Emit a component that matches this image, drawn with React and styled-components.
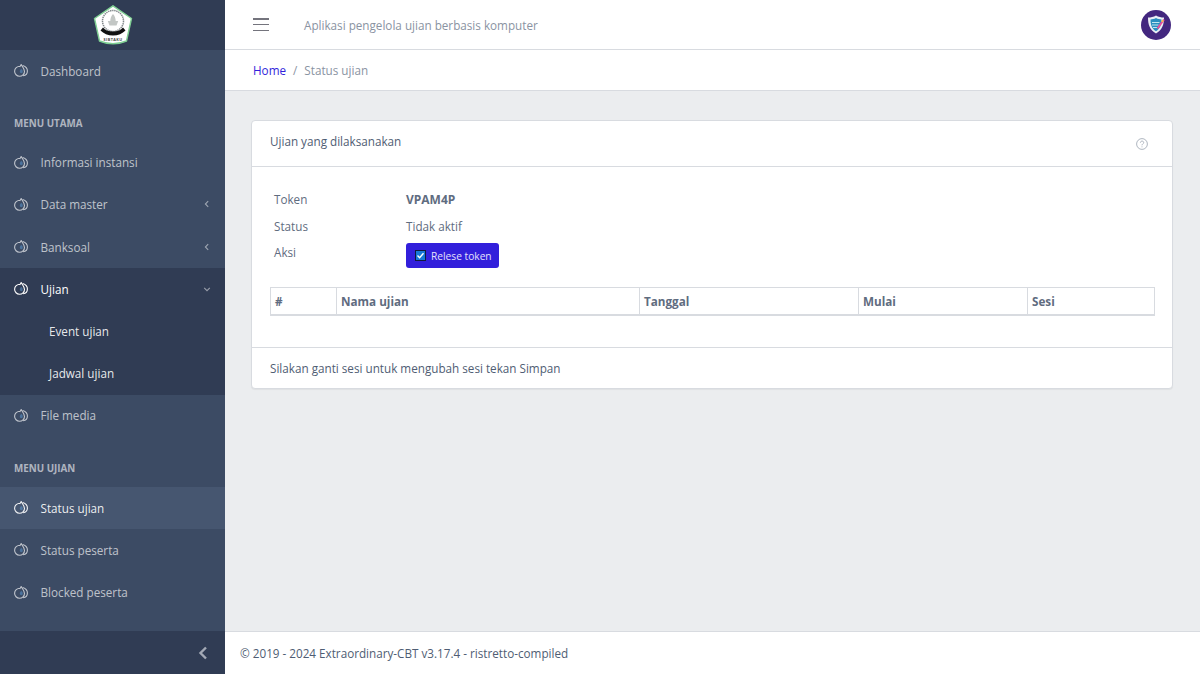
import React from 'react'
import styled, { createGlobalStyle } from 'styled-components'

const GlobalStyle = createGlobalStyle`
  html, body { margin: 0; padding: 0; height: 100%; }
  body {
    font-family: "Open Sans", "Noto Sans", sans-serif;
    font-size: 11.7px;
    color: #4f5d73;
    background: #ebedef;
  }
  * { box-sizing: border-box; }
`

const Layout = styled.div`
  display: flex;
  width: 1200px;
  height: 674px;
  overflow: hidden;
`

const Sidebar = styled.aside`
  width: 225px;
  flex-shrink: 0;
  display: flex;
  flex-direction: column;
  background: #3c4b64;
  color: rgba(255, 255, 255, 0.8);
`

const Brand = styled.div`
  height: 50px;
  background: #303c54;
  display: flex;
  align-items: center;
  justify-content: center;
`

const Nav = styled.nav`
  flex: 1;
`

const NavTitle = styled.div`
  height: ${p => p.$h}px;
  padding: 25px 14px 0;
  font-size: 9.8px;
  line-height: 14px;
  font-weight: 700;
  text-transform: uppercase;
  color: rgba(255, 255, 255, 0.6);
`

const NavItem = styled.div`
  height: 42.2px;
  display: flex;
  align-items: center;
  padding: 0 14px 0.5px;
  color: ${p => (p.$open ? '#fff' : 'rgba(255, 255, 255, 0.68)')};
  background: ${p => (p.$active ? '#465670' : p.$open ? '#303c54' : 'transparent')};
  ${p => p.$active && 'color: rgba(255, 255, 255, 0.92);'}

  svg.drop {
    width: 14px;
    height: 13px;
    margin-right: 12.5px;
    flex-shrink: 0;
  }
`

const ItemLabel = styled.span`
  flex: 1;
`

const SubItem = styled.div`
  height: 42.2px;
  display: flex;
  align-items: center;
  padding: 0 0 0.5px 49px;
  background: #303c54;
  color: rgba(255, 255, 255, 0.9);
`

const Minimizer = styled.div`
  height: 43px;
  background: #303c54;
  display: flex;
  align-items: center;
  justify-content: flex-end;
  padding-right: 16px;
  color: #a3a9b5;
`

const Main = styled.div`
  flex: 1;
  display: flex;
  flex-direction: column;
  min-width: 0;
`

const Header = styled.header`
  height: 50px;
  background: #fff;
  border-bottom: 1px solid #d8dbe0;
  display: flex;
  align-items: center;
  padding: 0 29px 0 28px;
`

const Burger = styled.div`
  width: 16px;
  height: 13px;
  margin-right: 35px;
  display: flex;
  flex-direction: column;
  justify-content: space-between;

  span {
    display: block;
    height: 1.5px;
    background: #74747d;
  }
`

const Tagline = styled.div`
  flex: 1;
  color: #8a93a2;
`

const Crumbs = styled.div`
  height: 41px;
  background: #fff;
  border-bottom: 1px solid #d8dbe0;
  display: flex;
  align-items: center;
  padding: 0 28px;
  color: #8a93a2;
`

const HomeLink = styled.a`
  color: #321fdb;
`

const Sep = styled.span`
  margin: 0 7px;
`

const Body = styled.main`
  flex: 1;
  padding: 29px 27px 0 26px;
`

const Card = styled.section`
  background: #fff;
  border: 1px solid #d8dbe0;
  border-radius: 4px;
  box-shadow: 0 1px 1px rgba(0, 0, 21, 0.05);
`

const CardHeader = styled.div`
  height: 46px;
  padding: 0 24px 5px 18px;
  border-bottom: 1px solid #d8dbe0;
  display: flex;
  align-items: center;
  justify-content: space-between;
`

const CardTitle = styled.div`
  color: #4f5d73;
  margin-top: -1px;
`

const CardHelp = styled.div`
  display: flex;
  margin-top: 5px;
`

const CardBody = styled.div`
  padding: 20px 18px 31px;
`

const InfoGrid = styled.div`
  display: grid;
  grid-template-columns: 132px 1fr;
  padding-left: 4px;
  grid-auto-rows: min-content;
`

const InfoLabel = styled.div`
  height: ${p => p.$h}px;
  padding-top: 4px;
  line-height: 17px;
  color: #5f6c80;
`

const InfoValue = styled.div`
  height: ${p => p.$h}px;
  padding-top: 4px;
  line-height: 17px;
  color: #5f6c80;
  font-weight: ${p => (p.$bold ? 700 : 400)};
  font-size: ${p => (p.$bold ? '12px' : 'inherit')};
`

const ReleaseButton = styled.button`
  display: inline-flex;
  align-items: center;
  height: 25px;
  width: 93px;
  margin-top: -1px;
  padding: 0 0 0 9px;
  border: 0;
  border-radius: 3px;
  background: #321fdb;
  color: #e4e1fb;
  font-family: inherit;
  font-size: 10.2px;

  svg {
    margin-right: 5px;
    flex-shrink: 0;
  }
`

const Table = styled.table`
  width: 884px;
  margin-top: 19px;
  border-collapse: collapse;
  table-layout: fixed;
  border-bottom: 2px solid #d8dbe0;

  th {
    height: 27px;
    padding: 1px 4px 0;
    border: 1px solid #d8dbe0;
    border-bottom: 0;
    text-align: left;
    font-size: 11.7px;
    font-weight: 700;
    color: #5f6c80;
  }
`

const CardFooter = styled.div`
  height: 41px;
  padding: 1px 18px 0;
  border-top: 1px solid #d8dbe0;
  display: flex;
  align-items: center;
  color: #4f5d73;
`

const Footer = styled.footer`
  height: 43px;
  background: #fff;
  border-top: 1px solid #d8dbe0;
  display: flex;
  align-items: center;
  padding: 0 15px;
  color: #4f5d73;
`

const DropIcon = () => (
  <svg className="drop" viewBox="0 0 14 13" fill="none" stroke="currentColor" strokeWidth="1.1">
    <path d="M6.4 2.200C3 2 .6 4.400.6 7.200c0 2.800 2.200 5 4.900 5 2.800 0 5-2.200 5-4.800 0-2.500-1.900-4.500-3.300-6.800-.5.800-1 1.500-1.500 2.300" />
    <path d="M8.700 1.500c2.600.9 4.700 3 4.700 5.400 0 2.500-1.900 4.500-4.300 4.900" />
    <path d="M7.300 4.800c.8.900 1.500 1.700 1.500 2.700 0 1-.7 1.700-1.500 1.700s-1.500-.7-1.500-1.700c0-1 .7-1.800 1.500-2.700z" fill="#5b9bd5" fillOpacity="0.5" stroke="none" />
  </svg>
)

const Chevron = ({ down }) => (
  <svg width="8" height="8" viewBox="0 0 8 8" fill="none" stroke="rgba(255,255,255,0.5)" strokeWidth="1.1">
    <path d={down ? 'M1.200 2.800 4 5.600l2.800-2.800' : 'M5.200 1.200 2.400 4l2.800 2.800'} />
  </svg>
)

const Logo = () => (
  <svg width="40" height="40" viewBox="0 0 40 40">
    <path d="M20 .8 38.500 13.500 33.500 36c-8.500 3.500-18.500 3.500-27 0L1.500 13.500z" fill="#fff" stroke="#7fcf93" strokeWidth="1.400" strokeLinejoin="round" />
    <circle cx="20" cy="16" r="10.500" fill="none" stroke="#80878a" strokeWidth="1.500" strokeDasharray="1.400 0.700" />
    <path d="M20 9c1.800 2 2.700 4.500 2.700 7h2.500l-1.700 4.500h-7L14.800 16h2.500c0-2.500.9-5 2.700-7z" fill="#c3c7c5" />
    <path d="M10 22.500c2.500 3 6 4 10 4s7.500-1 10-4l2.500 3c-3 3-7.500 5-12.500 5s-9.500-2-12.500-5z" fill="#111" />
    <text x="20" y="36.300" textAnchor="middle" fontSize="3.800" fontWeight="700" fill="#444" letterSpacing="0.400">SIBTAKU</text>
  </svg>
)

const Avatar = () => (
  <svg width="30" height="30" viewBox="0 0 30 30">
    <circle cx="15" cy="15" r="15" fill="#43277f" />
    <path d="M15 5.500c2.500 1.500 5.200 2.100 8 2.100 0 7-1.700 12.400-8 16-6.300-3.600-8-9-8-16 2.800 0 5.500-.6 8-2.100z" fill="#e9eef4" />
    <path d="M15 8c2 1 3.700 1.400 5.500 1.500 0 5-1.200 9-5.500 11.700-4.300-2.700-5.500-6.700-5.500-11.700C11.300 9.400 13 9 15 8z" fill="#2a8fc0" />
    <path d="M11 12.500h7.500M11 15h6.500M12 17.500h4" stroke="#bfe6ef" strokeWidth="1" />
    <path d="M23 9.500 16.500 18.500" stroke="#ec4f9c" strokeWidth="2" />
    <circle cx="21.500" cy="11" r="1.100" fill="#f6c445" />
  </svg>
)

const HelpIcon = () => (
  <svg width="12" height="12" viewBox="0 0 12 12" fill="none" stroke="#9aa3b0" strokeWidth="0.8">
    <circle cx="6" cy="6" r="5.400" />
    <path d="M4.400 4.700c0-1 .8-1.600 1.700-1.600s1.600.6 1.600 1.500c0 1.200-1.700 1.300-1.700 2.700" />
    <path d="M6 8.400v.9" />
  </svg>
)

const CheckIcon = () => (
  <svg width="11" height="11" viewBox="0 0 11 11">
    <rect x="0.500" y="0.500" width="10" height="10" fill="#1679d8" stroke="#10183f" />
    <path d="M2.500 5.600 4.600 7.700 8.500 3.300" fill="none" stroke="#fff" strokeWidth="1.400" />
  </svg>
)

export default function App() {
  return (
    <>
      <GlobalStyle />
      <Layout>
        <Sidebar>
          <Brand><Logo /></Brand>
          <Nav>
            <NavItem><DropIcon /><ItemLabel>Dashboard</ItemLabel></NavItem>
            <NavTitle $h={49.2}>Menu utama</NavTitle>
            <NavItem><DropIcon /><ItemLabel>Informasi instansi</ItemLabel></NavItem>
            <NavItem><DropIcon /><ItemLabel>Data master</ItemLabel><Chevron /></NavItem>
            <NavItem><DropIcon /><ItemLabel>Banksoal</ItemLabel><Chevron /></NavItem>
            <NavItem $open><DropIcon /><ItemLabel>Ujian</ItemLabel><Chevron down /></NavItem>
            <SubItem>Event ujian</SubItem>
            <SubItem>Jadwal ujian</SubItem>
            <NavItem><DropIcon /><ItemLabel>File media</ItemLabel></NavItem>
            <NavTitle $h={50.2}>Menu ujian</NavTitle>
            <NavItem $active><DropIcon /><ItemLabel>Status ujian</ItemLabel></NavItem>
            <NavItem><DropIcon /><ItemLabel>Status peserta</ItemLabel></NavItem>
            <NavItem><DropIcon /><ItemLabel>Blocked peserta</ItemLabel></NavItem>
          </Nav>
          <Minimizer>
            <svg width="12" height="14" viewBox="0 0 12 14" fill="none" stroke="currentColor" strokeWidth="2.400">
              <path d="M9 1.500 3.500 7 9 12.500" />
            </svg>
          </Minimizer>
        </Sidebar>
        <Main>
          <Header>
            <Burger><span /><span /><span /></Burger>
            <Tagline>Aplikasi pengelola ujian berbasis komputer</Tagline>
            <Avatar />
          </Header>
          <Crumbs>
            <HomeLink>Home</HomeLink><Sep>/</Sep>Status ujian
          </Crumbs>
          <Body>
            <Card>
              <CardHeader>
                <CardTitle>Ujian yang dilaksanakan</CardTitle>
                <CardHelp><HelpIcon /></CardHelp>
              </CardHeader>
              <CardBody>
                <InfoGrid>
                  <InfoLabel $h={27}>Token</InfoLabel>
                  <InfoValue $h={27} $bold>VPAM4P</InfoValue>
                  <InfoLabel $h={26}>Status</InfoLabel>
                  <InfoValue $h={26}>Tidak aktif</InfoValue>
                  <InfoLabel $h={28}>Aksi</InfoLabel>
                  <InfoValue $h={28}>
                    <ReleaseButton><CheckIcon />Relese token</ReleaseButton>
                  </InfoValue>
                </InfoGrid>
                <Table>
                  <colgroup>
                    <col style={{ width: 66 }} />
                    <col style={{ width: 303 }} />
                    <col style={{ width: 219 }} />
                    <col style={{ width: 169 }} />
                    <col style={{ width: 127 }} />
                  </colgroup>
                  <thead>
                    <tr>
                      <th>#</th>
                      <th>Nama ujian</th>
                      <th>Tanggal</th>
                      <th>Mulai</th>
                      <th>Sesi</th>
                    </tr>
                  </thead>
                </Table>
              </CardBody>
              <CardFooter>Silakan ganti sesi untuk mengubah sesi tekan Simpan</CardFooter>
            </Card>
          </Body>
          <Footer>© 2019 - 2024 Extraordinary-CBT v3.17.4 - ristretto-compiled</Footer>
        </Main>
      </Layout>
    </>
  )
}
